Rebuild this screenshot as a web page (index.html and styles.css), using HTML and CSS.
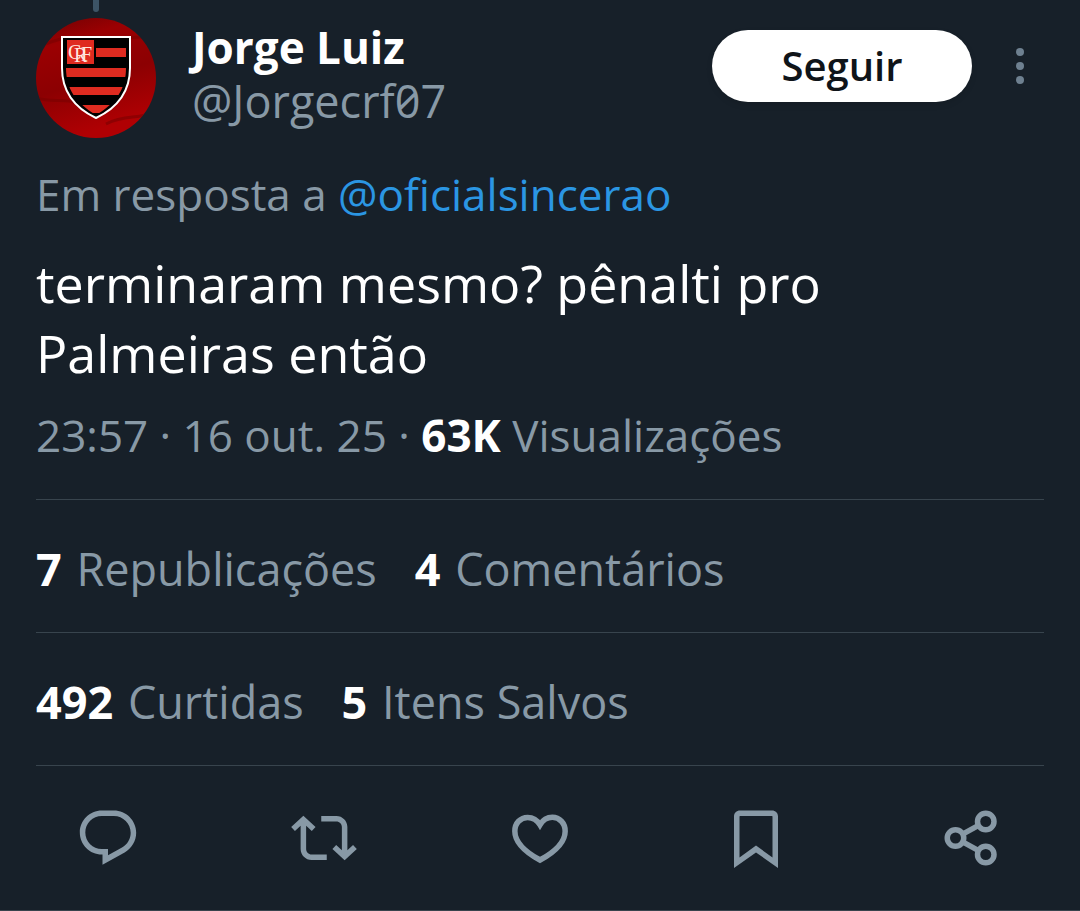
FILE: index.html
```
<!DOCTYPE html>
<html lang="pt-BR">
<head>
    <meta charset="UTF-8">
    <meta name="viewport" content="width=device-width, initial-scale=1.0">
    <title>Jorge Luiz</title>
    <link rel="stylesheet" href="styles.css">
</head>
<body>
    <article class="tweet">
        <div class="thread-line"></div>
        <header class="header">
            <svg class="avatar" viewBox="0 0 120 120" aria-hidden="true">
                <defs>
                    <linearGradient id="cloth" x1="0" y1="0" x2="0.3" y2="1">
                        <stop offset="0" stop-color="#6d0203"/>
                        <stop offset="0.25" stop-color="#9b0002"/>
                        <stop offset="0.6" stop-color="#8c0002"/>
                        <stop offset="1" stop-color="#b00003"/>
                    </linearGradient>
                    <clipPath id="circle"><circle cx="60" cy="60" r="60"/></clipPath>
                    <clipPath id="shield"><path d="M30 22H90V50C90 71 80 85 60 97C40 85 30 71 30 50Z"/></clipPath>
                </defs>
                <g clip-path="url(#circle)">
                    <path fill="url(#cloth)" d="M0 0h120v120H0z"/>
                    <path d="M0 80C20 86 30 78 45 88M70 106C90 96 100 102 120 94M10 26C40 12 80 24 112 18" fill="none" stroke="#7a0002" stroke-width="3" opacity="0.6"/>
                </g>
                <path d="M26 19H94V50C94 72 83 89 60 100C37 89 26 72 26 50Z" fill="#000" stroke="#fff" stroke-width="2"/>
                <g clip-path="url(#shield)" fill="#df2b20">
                    <path d="M31 22h27v24H31zM60 30h30v9H60zM30 50h60v9H30zM30 69h60v8H30zM30 87h60v8H30z"/>
                </g>
                <text class="crest-letters" y="41"><tspan x="32">C</tspan><tspan x="38" dy="3">R</tspan><tspan x="45" dy="-1">F</tspan></text>
            </svg>
            <div class="names">
                <a class="name" href="#">Jorge Luiz</a>
                <a class="handle" href="#">@Jorgecrf07</a>
            </div>
            <button class="follow">Seguir</button>
            <button class="more" aria-label="Mais">
                <svg viewBox="0 0 8 36" fill="currentColor"><circle cx="4" cy="4" r="4"/><circle cx="4" cy="18" r="4"/><circle cx="4" cy="32" r="4"/></svg>
            </button>
        </header>
        <p class="reply-to">Em resposta a <a href="#">@oficialsincerao</a></p>
        <p class="text">terminaram mesmo? pênalti pro Palmeiras então</p>
        <p class="meta">23:57 · 16 out. 25 · <strong>63K</strong> Visualizações</p>
        <div class="stats">
            <a href="#"><strong>7</strong> Republicações</a>
            <a href="#"><strong>4</strong> Comentários</a>
        </div>
        <div class="stats">
            <a href="#"><strong>492</strong> Curtidas</a>
            <a href="#"><strong>5</strong> Itens Salvos</a>
        </div>
    </article>
    <div class="actions">
        <button aria-label="Responder">
            <svg viewBox="0 0 24 24"><path fill="currentColor" d="M1.751 10c0-4.42 3.584-8 8.005-8h4.366c4.49 0 8.129 3.64 8.129 8.13 0 2.96-1.607 5.68-4.196 7.11l-8.054 4.46v-3.69h-.067c-4.49.1-8.183-3.51-8.183-8.01zm8.005-6c-3.317 0-6.005 2.69-6.005 6 0 3.37 2.77 6.08 6.138 6.01l.351-.01h1.761v2.3l5.087-2.81c1.951-1.08 3.163-3.13 3.163-5.36 0-3.39-2.744-6.13-6.129-6.13H9.756z"/></svg>
        </button>
        <button aria-label="Republicar">
            <svg viewBox="0 0 24 24"><path fill="currentColor" d="M4.5 3.88l4.432 4.14-1.364 1.46L5.5 7.55V16c0 1.1.896 2 2 2H13v2H7.5c-2.209 0-4-1.79-4-4V7.55L1.432 9.48.068 8.02 4.5 3.88zM16.5 6H11V4h5.5c2.209 0 4 1.79 4 4v8.45l2.068-1.93 1.364 1.46-4.432 4.14-4.432-4.14 1.364-1.46 2.068 1.93V8c0-1.1-.896-2-2-2z"/></svg>
        </button>
        <button aria-label="Curtir">
            <svg viewBox="0 0 24 24"><path fill="none" stroke="currentColor" stroke-width="2" d="M12 7.2C11 5.5 9.4 4.5 7.5 4.5 4.9 4.5 2.85 6.6 2.85 9.5 2.85 13.1 6 16.7 12 20 18 16.7 21.15 13.1 21.15 9.5 21.15 6.6 19.1 4.5 16.5 4.5 14.6 4.5 13 5.5 12 7.2Z"/></svg>
        </button>
        <button aria-label="Salvar">
            <svg viewBox="0 0 24 24"><path fill="currentColor" d="M4 4.2C4 2.9 4.9 2 6.2 2h11.6C19.1 2 20 2.9 20 4.2v18.74l-8-5.71-8 5.71zM6.2 4Q6 4 6 4.2v14.86l6-4.29 6 4.29V4.2Q18 4 17.8 4z"/></svg>
        </button>
        <button aria-label="Compartilhar">
            <svg viewBox="0 0 24 24" fill="none" stroke="currentColor" stroke-width="2"><circle cx="6" cy="12" r="3"/><circle cx="17" cy="6" r="3"/><circle cx="17" cy="18" r="3"/><path d="M8.6 10.6l5.8-3.2M8.6 13.4l5.8 3.2"/></svg>
        </button>
    </div>
</body>
</html>
```
FILE: styles.css
```
* {
    box-sizing: border-box;
}
body {
    margin: 0;
    background-color: #172029;
    color: #8899a6;
    font-family: "Open Sans", "Noto Sans", sans-serif;
    font-size: 44px;
    line-height: 54px;
}
a {
    color: inherit;
    text-decoration: none;
}
p {
    margin: 0;
}
strong {
    color: #fff;
    font-weight: 700;
}
button {
    border: none;
    background: none;
    padding: 0;
    font-family: inherit;
    color: inherit;
    cursor: pointer;
}
svg {
    display: block;
}
.tweet {
    padding: 0 36px;
}
.thread-line {
    width: 6px;
    height: 12px;
    margin-left: 57px;
    border-radius: 0 0 3px 3px;
    background-color: #3d5466;
}
.header {
    display: flex;
    align-items: flex-start;
    padding-top: 6px;
}
.avatar {
    width: 120px;
    height: 120px;
    margin-right: 36px;
}
.crest-letters {
    font-family: "Liberation Serif", serif;
    font-size: 20px;
    fill: #ffe6df;
}
.names {
    display: flex;
    flex-direction: column;
    flex: 1;
    padding-top: 2px;
}
.name {
    color: #fff;
    font-size: 44px;
    font-weight: 700;
}
.handle {
    font-size: 45px;
    font-feature-settings: "zero";
}
.follow {
    width: 260px;
    height: 72px;
    margin-top: 12px;
    padding-bottom: 2px;
    border-radius: 36px;
    background-color: #fff;
    color: #0f1419;
    font-size: 40px;
    font-weight: 600;
    box-shadow: 0 3px 6px rgba(0, 0, 0, 0.1);
}
.more {
    width: 72px;
    height: 72px;
    margin: 12px -12px 0 12px;
    color: #6e8090;
}
.more svg {
    height: 36px;
    margin: 0 auto;
}
.reply-to {
    padding-top: 29px;
}
.reply-to a {
    color: #2b96e3;
}
.text {
    padding-top: 27px;
    color: #fff;
    font-size: 52px;
    line-height: 70px;
}
.meta {
    padding: 20px 0 37px;
    border-bottom: 1px solid #38444d;
}
.stats {
    display: flex;
    gap: 38px;
    padding: 42px 0 36px;
    border-bottom: 1px solid #38444d;
    font-size: 45px;
}
.stats strong {
    margin-right: 3px;
}
.actions {
    display: grid;
    grid-template-columns: repeat(5, 1fr);
    height: 145px;
    border-bottom: 1px solid #38444d;
}
.actions svg {
    width: 66px;
    height: 66px;
    margin: 0 auto;
}
```
